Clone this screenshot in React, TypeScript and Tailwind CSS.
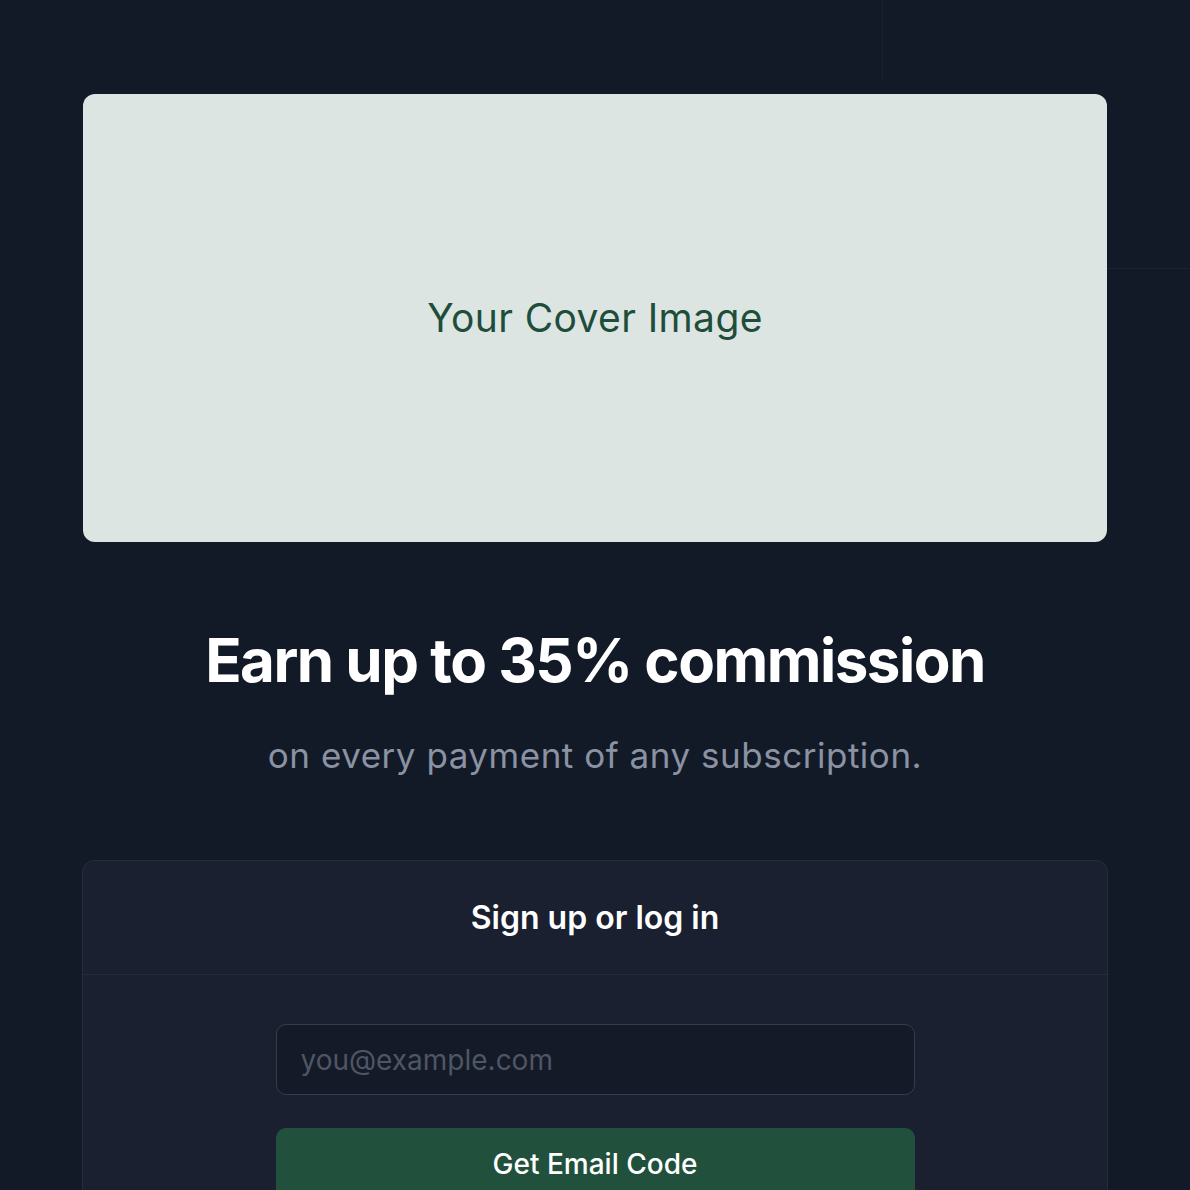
import React from "react";

export default function App() {
  return (
    <div
      className="relative min-h-[1190px] w-full overflow-hidden bg-[#131a27] text-white"
      style={{ fontFamily: "Inter, 'Noto Sans', sans-serif" }}
    >
      {/* faint grid lines in the background */}
      <div className="absolute left-[882px] top-0 h-[82px] w-px bg-[#182030]" />
      <div className="absolute left-[1107px] top-[268px] h-px w-[83px] bg-[#1b2333]" />

      <div className="relative mx-auto flex w-[1024px] flex-col items-center pt-[94px]">
        <div className="flex h-[448px] w-full items-center justify-center rounded-[12px] bg-[#dce5e2]">
          <span className="text-[39px] tracking-[0.01em] text-[#1f4d3b]">Your Cover Image</span>
        </div>

        <h1 className="mt-[82px] text-[60px] font-bold leading-[72px] tracking-[-0.025em] text-white">
          Earn up to 35% commission
        </h1>
        <p className="mt-[37px] text-[35px] leading-[44px] tracking-[0.015em] text-[#8a92a3]">
          on every payment of any subscription.
        </p>

        <div className="mt-[83px] w-[1026px] rounded-[12px] border border-[#252c3b] bg-[#1a2030]">
          <div className="flex h-[114px] items-center justify-center border-b border-[#252c3b]">
            <span className="text-[32px] font-semibold text-white">Sign up or log in</span>
          </div>
          <div className="flex flex-col items-center gap-[33px] pb-[40px] pt-[49px]">
            <input
              type="email"
              placeholder="you@example.com"
              className="h-[71px] w-[639px] rounded-[10px] border border-[#353d4c] bg-[#141a28] px-[24px] text-[28px] text-white placeholder:text-[#4e5665] focus:outline-none"
            />
            <button className="h-[72px] w-[639px] rounded-[10px] bg-[#21513d] text-[28px] font-medium text-white">
              Get Email Code
            </button>
          </div>
        </div>
      </div>
    </div>
  );
}
